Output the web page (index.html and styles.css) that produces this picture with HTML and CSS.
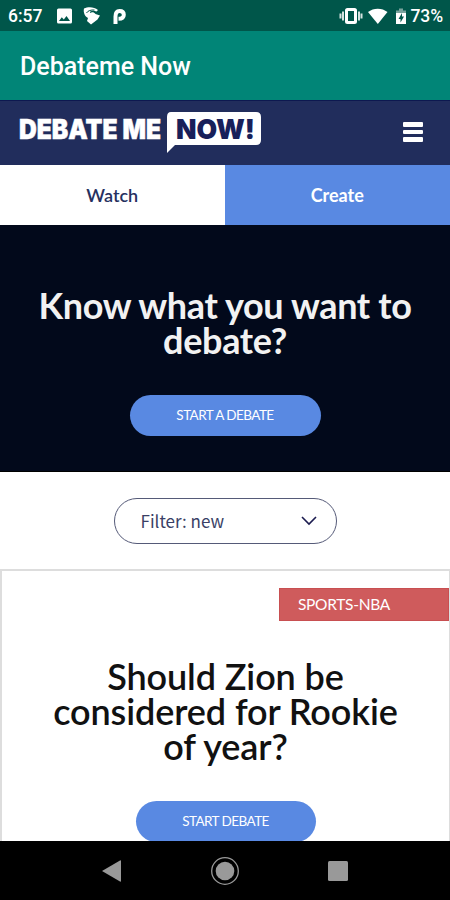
FILE: index.html
```html
<!DOCTYPE html>
<html lang="en">
<head>
    <meta charset="UTF-8">
    <meta name="viewport" content="width=device-width, initial-scale=1.0">
    <title>Debateme Now</title>
    <link rel="stylesheet" href="styles.css">
</head>
<body>
    <div class="status-bar">
        <span class="time">6:57</span>
        <svg class="notifications" width="70" height="20" viewBox="0 0 70 20">
            <path fill="#fff" fill-rule="evenodd" d="M1.500 2.500h12q1.500 0 1.500 1.500v12q0 1.500-1.500 1.500h-12q-1.500 0-1.500-1.500v-12q0-1.500 1.500-1.500zM2 15h11l-3.500-5-2.700 3.500-2-2.300z"/>
            <path fill="#fff" d="M27 2.500C31 .500 37 .500 41 4l-1.500 1.500C36 4 32.500 5 33 7c2-1.500 4-1 5.500 1l4.500 1.500-2.500 4L34 18.500l-4-3.500 1-3c-3-1.500-5-5.500-4-9.500z"/>
            <path d="M29.500 7c1.500-2.500 4.500-3.200 8-3" fill="none" stroke="#00564a" stroke-width="1"/>
            <path fill="none" stroke="#fff" stroke-width="4" d="M58.500 18v-7.500c0-3 1-5.500 4-5.500 2.800 0 4.300 1.500 4.300 3.700 0 2.600-2 4-5.300 4"/>
        </svg>
        <svg class="system" width="72" height="20" viewBox="0 0 72 20">
            <path fill="none" stroke="#d5e3e0" stroke-width="2" d="M1.500 7.500v5M4 5.500v9M20 5.500v9M22.500 7.500v5"/>
            <rect x="7.500" y="3.500" width="9" height="13" rx="1" fill="none" stroke="#fff" stroke-width="3"/>
            <path fill="#fff" d="M29 6C34.500 1.500 43 1.500 48.500 6l-9.700 12z"/>
            <path fill="#7aa39d" d="M57 7V4.500h3V2.500h4v2h3V7z"/>
            <path fill="#fff" d="M57 7h10v11H57z"/>
            <path fill="#00564a" d="M63 7l-3.500 6h2v3.500l3.500-6h-2z"/>
        </svg>
        <span class="battery">73%</span>
    </div>

    <div class="app-bar">Debateme Now</div>

    <header class="header">
        <svg class="logo" width="246" height="46" viewBox="0 0 246 46">
            <path fill="#fff" d="M154 3h85q5 0 5 5v23q0 5-5 5h-81l-8 8V8q0-5 4-5z"/>
            <text class="logo-text" x="2" y="29.500" textLength="142" lengthAdjust="spacingAndGlyphs">DEBATE ME</text>
            <text class="logo-text logo-now" x="159" y="29.500" textLength="79" lengthAdjust="spacingAndGlyphs">NOW!</text>
        </svg>
        <div class="menu">
            <span></span>
            <span></span>
            <span></span>
        </div>
    </header>

    <nav class="tabs">
        <a class="tab">Watch</a>
        <a class="tab active">Create</a>
    </nav>

    <section class="hero">
        <h1>Know what you want to debate?</h1>
        <a class="btn btn-hero">START A DEBATE</a>
    </section>

    <div class="filter-row">
        <div class="filter">
            <span>Filter: new</span>
            <svg width="16" height="10" viewBox="0 0 16 10">
                <path d="M1 1l7 7 7-7" fill="none" stroke="#1c1c50" stroke-width="1.600"/>
            </svg>
        </div>
    </div>

    <article class="card">
        <div class="tag">SPORTS-NBA</div>
        <h2>Should Zion be considered for Rookie of year?</h2>
        <a class="btn btn-card">START DEBATE</a>
    </article>

    <div class="nav-bar">
        <svg width="22" height="24" viewBox="0 0 22 24">
            <path fill="#999" d="M1 12L19 1.500q1-.5 1 .5v20q0 1-1 .5z"/>
        </svg>
        <svg width="30" height="30" viewBox="0 0 30 30">
            <circle cx="15" cy="15" r="13.300" fill="none" stroke="#999" stroke-width="1.300"/>
            <circle cx="15" cy="15" r="9.300" fill="#999"/>
        </svg>
        <svg width="22" height="22" viewBox="0 0 22 22">
            <rect x="1" y="1" width="20" height="20" rx="1.500" fill="#999"/>
        </svg>
    </div>
</body>
</html>
```
FILE: styles.css
```css
* {
    box-sizing: border-box;
}

body {
    margin: 0;
    height: 900px;
    display: flex;
    flex-direction: column;
    overflow: hidden;
    background: #fff;
    font-family: Lato, sans-serif;
}

body > * {
    flex-shrink: 0;
}

.status-bar {
    height: 31px;
    display: flex;
    align-items: center;
    padding: 0 7px 0 8px;
    background: #00564a;
    color: #fff;
    font: 500 17.5px Roboto, sans-serif;
}

.notifications {
    margin-left: 15px;
}

.system {
    margin-left: auto;
}

.battery {
    letter-spacing: -0.1px;
}

.app-bar {
    height: 69px;
    padding-left: 20px;
    background: #018577;
    color: #fff;
    font: 500 25px/71px Roboto, sans-serif;
}

.header {
    height: 65px;
    display: flex;
    justify-content: space-between;
    align-items: center;
    padding: 0 27px 2px 17px;
    background: #212d5c;
    border-top: 1px solid #0d1850;
}

.logo-text {
    font: 900 27px Inter, sans-serif;
    fill: #fff;
    stroke: #fff;
    stroke-width: 0.5px;
}

.logo-now {
    fill: #18205a;
    stroke: none;
}

.menu {
    width: 20px;
    display: flex;
    flex-direction: column;
    gap: 3px;
}

.menu span {
    height: 4.5px;
    border-radius: 1px;
    background: #fff;
}

.tabs {
    height: 60px;
    display: grid;
    grid-template-columns: 224.5px 1fr;
}

.tab {
    color: #26305f;
    font-size: 18px;
    font-weight: 600;
    line-height: 60px;
    text-align: center;
}

.tab.active {
    background: #5989e2;
    color: #fff;
    font-weight: 700;
}

.hero {
    height: 247px;
    padding-top: 63px;
    display: flex;
    flex-direction: column;
    align-items: center;
    background: #02091b;
    border-bottom: 1px solid #000;
}

h1,
h2 {
    margin: 0;
    font-size: 36px;
    line-height: 35px;
    text-align: center;
}

h1 {
    width: 400px;
    color: #f2f2f2;
    font-weight: 700;
    letter-spacing: -0.35px;
}

.btn {
    display: block;
    height: 41px;
    border-radius: 21px;
    background: #5989e2;
    color: #fff;
    font-size: 13.5px;
    letter-spacing: -0.55px;
    line-height: 40px;
    text-align: center;
}

.btn-hero {
    width: 191px;
    margin-top: 37px;
}

.filter-row {
    height: 97px;
    padding-top: 26px;
}

.filter {
    width: 223px;
    height: 46px;
    margin: 0 auto;
    padding: 0 19px 2px 26px;
    display: flex;
    justify-content: space-between;
    align-items: center;
    border: 1px solid #555a78;
    border-radius: 23px;
    color: #3a3f66;
    font: 400 17px "Noto Sans CJK SC", sans-serif;
}

.filter svg {
    margin-top: 2px;
}

.card {
    height: 272px;
    display: flex;
    flex-direction: column;
    align-items: center;
    overflow: hidden;
    border: 2px solid #ddd;
    border-bottom: 0;
    border-right-width: 1px;
}

.tag {
    width: 170px;
    height: 33px;
    flex-shrink: 0;
    margin-top: 17px;
    padding-left: 18px;
    align-self: flex-end;
    background: #cf5b5c;
    border: 1px solid #c84f51;
    color: #fff;
    font-size: 15.5px;
    letter-spacing: -0.3px;
    line-height: 30px;
}

h2 {
    width: 370px;
    margin-top: 38px;
    color: #111;
    font-weight: 600;
    letter-spacing: -0.1px;
}

.btn-card {
    width: 180px;
    flex-shrink: 0;
    margin-top: 37px;
}

.nav-bar {
    height: 59px;
    display: flex;
    justify-content: center;
    align-items: center;
    gap: 87px;
    background: #000;
}
```
